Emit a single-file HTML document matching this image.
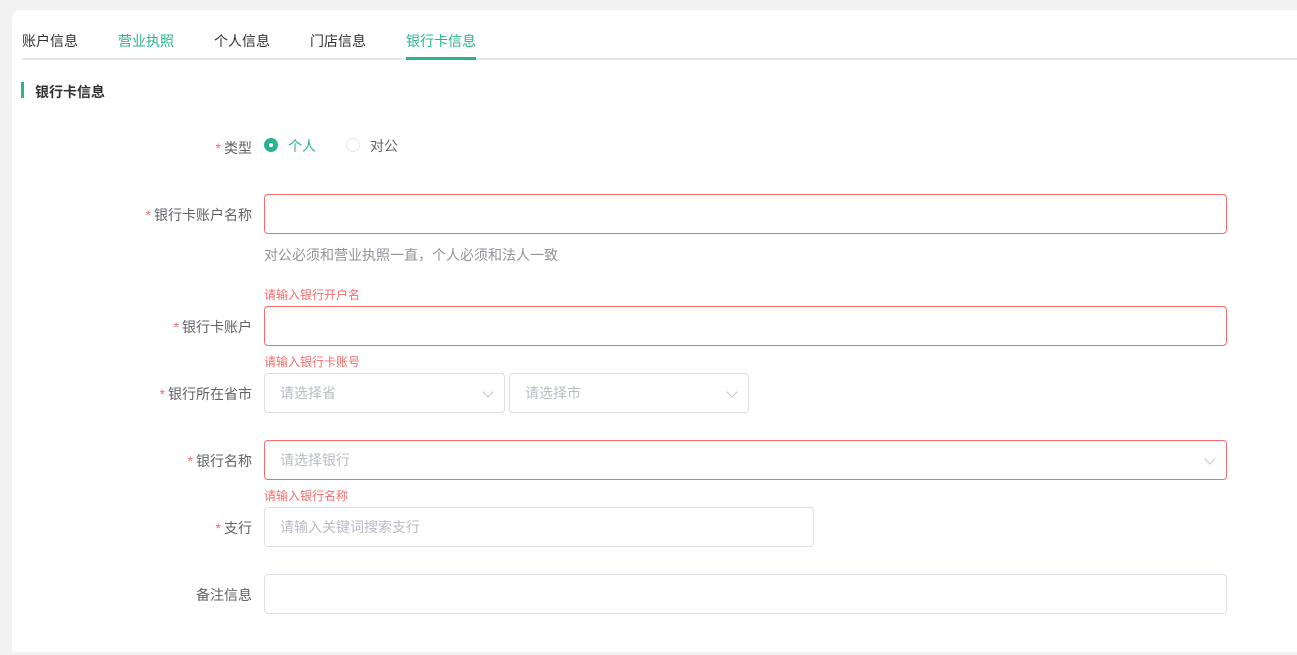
<!DOCTYPE html>
<html><head><meta charset="utf-8"><style>
*{box-sizing:border-box;margin:0;padding:0}
body{width:1297px;height:655px;background:#f2f2f2;font-family:"Liberation Sans","Noto Sans CJK SC",sans-serif;font-size:14px;color:#333;position:relative;overflow:hidden}
.card{position:absolute;left:12px;top:10px;width:1300px;height:642px;background:#fff;border-radius:8px 0 0 0}
.a{position:absolute;white-space:nowrap}
.tab{top:31px;font-size:14px;color:#303133}
.lbl{right:1045px;font-size:14px;color:#606266;text-align:right}
.lbl i{font-style:normal;color:#f56c6c;margin-right:3px}
.in{position:absolute;height:40px;border:1px solid #dcdfe6;border-radius:4px;background:#fff;color:#b8bcc4;padding-left:15px;line-height:38px;font-size:14px}
.err{border-color:#f56c6c}
.em{font-size:12px;color:#f56c6c}
.chev{position:absolute;right:12px;top:14px;width:8px;height:8px;border-right:1px solid #c0c4cc;border-bottom:1px solid #c0c4cc;transform:rotate(45deg)}
</style></head><body>
<div class="card"></div>
<div class="a tab" style="left:22px">账户信息</div>
<div class="a tab" style="left:118px;color:#2bb390">营业执照</div>
<div class="a tab" style="left:214px">个人信息</div>
<div class="a tab" style="left:310px">门店信息</div>
<div class="a tab" style="left:406px;color:#2bb390">银行卡信息</div>
<div class="a" style="left:22px;top:58px;width:1275px;height:2px;background:#e4e7ed"></div>
<div class="a" style="left:406px;top:57px;width:70px;height:3px;background:#2bb390"></div>
<div class="a" style="left:21px;top:82px;width:3px;height:16px;background:#2bb390"></div>
<div class="a" style="left:35px;top:82px;font-weight:bold;font-size:14px;color:#303133">银行卡信息</div>

<div class="a lbl" style="top:138px"><i>*</i>类型</div>
<div class="a" style="left:264px;top:138px;width:14px;height:14px;border-radius:50%;background:#2bb390"><div style="position:absolute;left:5px;top:5px;width:4px;height:4px;border-radius:50%;background:#fff"></div></div>
<div class="a" style="left:288px;top:136px;color:#2bb390">个人</div>
<div class="a" style="left:346px;top:138px;width:14px;height:14px;border-radius:50%;border:1px solid #e4e7ed"></div>
<div class="a" style="left:370px;top:136px;color:#606266">对公</div>

<div class="a lbl" style="top:205px"><i>*</i>银行卡账户名称</div>
<div class="in err" style="left:264px;top:194px;width:963px"></div>
<div class="a" style="left:264px;top:245px;color:#909399">对公必须和营业执照一直，个人必须和法人一致</div>
<div class="a em" style="left:264px;top:286px">请输入银行开户名</div>

<div class="a lbl" style="top:317px"><i>*</i>银行卡账户</div>
<div class="in err" style="left:264px;top:306px;width:963px"></div>
<div class="a em" style="left:264px;top:353px">请输入银行卡账号</div>

<div class="a lbl" style="top:384px"><i>*</i>银行所在省市</div>
<div class="in" style="left:264px;top:373px;width:241px">请选择省<span class="chev"></span></div>
<div class="in" style="left:509px;top:373px;width:240px">请选择市<span class="chev"></span></div>

<div class="a lbl" style="top:451px"><i>*</i>银行名称</div>
<div class="in err" style="left:264px;top:440px;width:963px">请选择银行<span class="chev"></span></div>
<div class="a em" style="left:264px;top:487px">请输入银行名称</div>

<div class="a lbl" style="top:518px"><i>*</i>支行</div>
<div class="in" style="left:264px;top:507px;width:550px">请输入关键词搜索支行</div>

<div class="a lbl" style="top:585px">备注信息</div>
<div class="in" style="left:264px;top:574px;width:963px"></div>
</body></html>
